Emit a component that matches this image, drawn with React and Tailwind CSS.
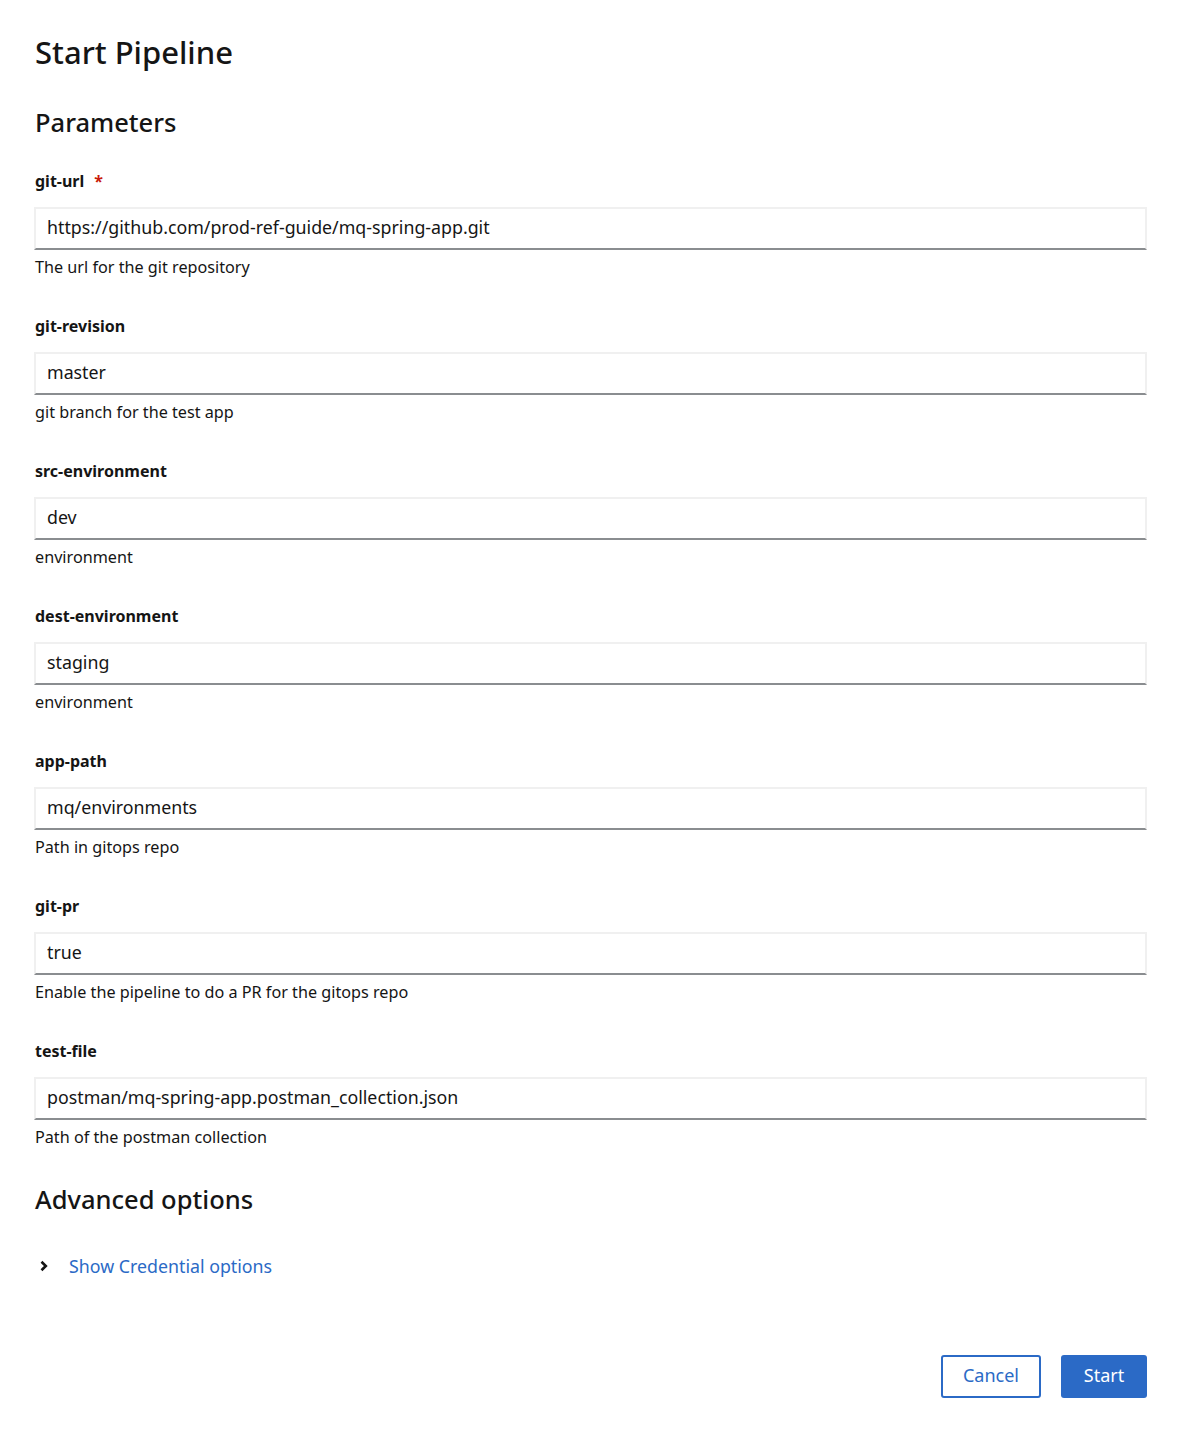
import React from 'react';

const params = [
  { name: 'git-url', value: 'https://github.com/prod-ref-guide/mq-spring-app.git', help: 'The url for the git repository', required: true },
  { name: 'git-revision', value: 'master', help: 'git branch for the test app' },
  { name: 'src-environment', value: 'dev', help: 'environment' },
  { name: 'dest-environment', value: 'staging', help: 'environment' },
  { name: 'app-path', value: 'mq/environments', help: 'Path in gitops repo' },
  { name: 'git-pr', value: 'true', help: 'Enable the pipeline to do a PR for the gitops repo' },
  { name: 'test-file', value: 'postman/mq-spring-app.postman_collection.json', help: 'Path of the postman collection' },
];

const Field = ({ p }) => (
  <div className="flex flex-col">
    <label className="h-[20px] pl-[1px] text-[16px] leading-[20px] font-bold text-[#151515] flex items-center">
      {p.name}
      {p.required && <span className="ml-[10px] text-[#c9190b]">*</span>}
    </label>
    <input
      readOnly
      value={p.value}
      className="mt-[16px] h-[43px] w-full border-2 border-[#f0f0f0] border-b-[#8a8d90] bg-white px-[11px] pb-[4px] text-[17.8px] text-[#151515] outline-none"
    />
    <p className="mt-[7px] h-[20px] pl-[1px] text-[16.2px] leading-[20px] text-[#151515]">{p.help}</p>
  </div>
);

export default function App() {
  return (
    <div className="min-h-[1435px] bg-white px-[34px] pt-[32px] text-[#151515] font-['Noto_Sans',sans-serif]">
      <h1 className="h-[40px] text-[31px] leading-[40px] font-medium pl-[1px]">Start Pipeline</h1>
      <h2 className="mt-[35px] h-[30px] text-[25.5px] leading-[30px] font-medium pl-[1px]">Parameters</h2>

      <div className="mt-[34px] flex flex-col gap-[39px]">
        {params.map((p) => (
          <Field key={p.name} p={p} />
        ))}
      </div>

      <h2 className="mt-[37px] h-[30px] text-[25.5px] leading-[30px] font-medium pl-[1px]">Advanced options</h2>

      <button className="mt-[40px] flex h-[24px] items-center pl-[4px] text-[17.8px]">
        <svg width="12" height="12" viewBox="0 0 12 12" className="mr-[19px]">
          <path d="M3.5 1.8 L7.8 6 L3.5 10.2" fill="none" stroke="#151515" strokeWidth="2.6" />
        </svg>
        <span className="text-[#2b6ac6]">Show Credential options</span>
      </button>

      <div className="mt-[77px] flex justify-end gap-[20px]">
        <button className="h-[43px] w-[100px] rounded-[3px] border-2 border-[#2b6ac6] pb-[3px] text-[18px] text-[#2b6ac6]">
          Cancel
        </button>
        <button className="h-[43px] w-[86px] rounded-[3px] bg-[#2b6ac6] pb-[3px] text-[18px] text-white">
          Start
        </button>
      </div>
    </div>
  );
}
